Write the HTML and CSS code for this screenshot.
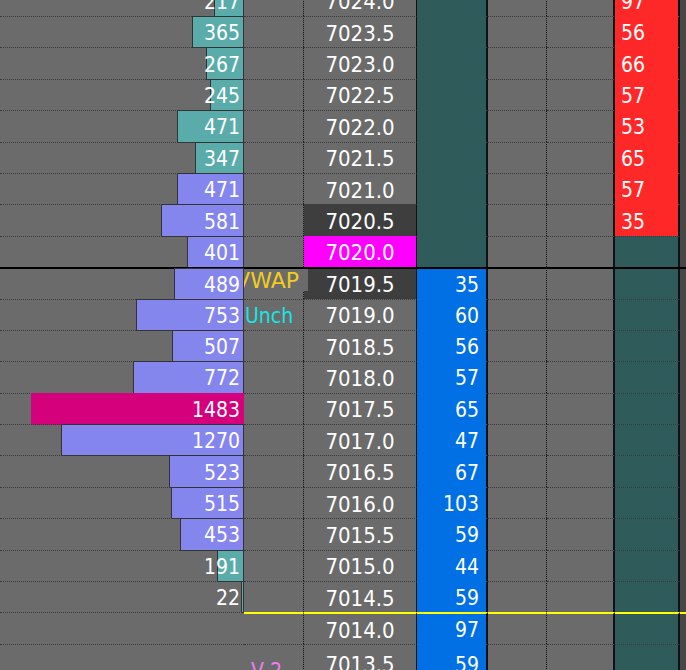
FILE: index.html
```html
<!DOCTYPE html>
<html lang="en">
<head>
    <meta charset="UTF-8">
    <title>Price Ladder</title>
    <link rel="stylesheet" href="styles.css">
</head>
<body>
    <div class="ladder">
        <div class="rows" id="rows">
            <!-- rows built below -->
        </div>
    </div>

    <script>
        // one entry per price level, top of the ladder first
        const levels = [
            { price: '7024.0', vol: 217,  tone: 'out', ask: 97 },
            { price: '7023.5', vol: 365,  tone: 'out', ask: 56 },
            { price: '7023.0', vol: 267,  tone: 'out', ask: 66 },
            { price: '7022.5', vol: 245,  tone: 'out', ask: 57 },
            { price: '7022.0', vol: 471,  tone: 'out', ask: 53 },
            { price: '7021.5', vol: 347,  tone: 'out', ask: 65 },
            { price: '7021.0', vol: 471,  tone: 'va',  ask: 57 },
            { price: '7020.5', vol: 581,  tone: 'va',  ask: 35, cell: 'inside' },
            { price: '7020.0', vol: 401,  tone: 'va',  cell: 'last' },
            { price: '7019.5', vol: 489,  tone: 'va',  bid: 35, cell: 'inside', line: 'open', tag: 'VWAP' },
            { price: '7019.0', vol: 753,  tone: 'va',  bid: 60, note: 'Unch', noteClass: 'unch' },
            { price: '7018.5', vol: 507,  tone: 'va',  bid: 56 },
            { price: '7018.0', vol: 772,  tone: 'va',  bid: 57 },
            { price: '7017.5', vol: 1483, tone: 'poc', bid: 65 },
            { price: '7017.0', vol: 1270, tone: 'va',  bid: 47 },
            { price: '7016.5', vol: 523,  tone: 'va',  bid: 67 },
            { price: '7016.0', vol: 515,  tone: 'va',  bid: 103 },
            { price: '7015.5', vol: 453,  tone: 'va',  bid: 59 },
            { price: '7015.0', vol: 191,  tone: 'out', bid: 44 },
            { price: '7014.5', vol: 22,   tone: 'out', bid: 59 },
            { price: '7014.0', bid: 97, line: 'low' },
            { price: '7013.5', bid: 59, note: 'V 2', noteClass: 'vtwo' }
        ];

        // bar length in px per contract traded
        const scale = 0.1445;

        const rowsEl = document.getElementById('rows');

        levels.forEach(level => {
            const row = document.createElement('div');
            row.className = 'row' + (level.line ? ' ' + level.line : '');

            let volHtml = '';
            if (level.vol) {
                const w = Math.max(3, Math.round(level.vol * scale - 1));
                volHtml = `
                    <div class="bar ${level.tone}" style="width:${w}px"></div>
                    <span class="num">${level.vol}</span>`;
            }

            let labelHtml = '';
            if (level.tag) {
                labelHtml = `<span class="tag"><span>${level.tag}</span></span>`;
            } else if (level.note) {
                labelHtml = `<span class="note ${level.noteClass}">${level.note}</span>`;
            }

            row.innerHTML = `
                <div class="cell vol">${volHtml}</div>
                <div class="cell label">${labelHtml}</div>
                <div class="cell price ${level.cell || ''}">${level.price}</div>
                <div class="cell bid ${level.bid ? 'on' : ''}">${level.bid || ''}</div>
                <div class="cell side"></div>
                <div class="cell side solid"></div>
                <div class="cell ask ${level.ask ? 'on' : ''}">${level.ask || ''}</div>
                <div class="cell tail"></div>
            `;
            rowsEl.appendChild(row);
        });
    </script>
</body>
</html>
```

FILE: styles.css
```css
* {
    box-sizing: border-box;
    margin: 0;
    padding: 0;
}

body {
    background: #6b6b6b;
    color: #fff;
    font-family: "DejaVu Sans Condensed", "DejaVu Sans", sans-serif;
    font-stretch: condensed;
    font-size: 21px;
}

.ladder {
    width: 686px;
    height: 670px;
    overflow: hidden;
}

.rows {
    margin-top: -15.4px;
}

.row {
    display: grid;
    grid-template-columns: 244px 60px 113px 71px 59px 68px 65px 6px;
    height: 31.4px;
}

.cell {
    border-top: 1px dotted #3a3a3a;
    display: flex;
    align-items: center;
    padding-top: 2px;
    white-space: nowrap;
}

/* volume profile */
.vol {
    display: grid;
    padding-top: 0;
}

.bar {
    grid-area: 1 / 1;
    justify-self: end;
    align-self: start;
    height: calc(100% + 2px);
    margin-top: -1px;
    margin-bottom: -1px;
    border: 1px solid #333;
}

.bar.out { background: #5aacaa; }
.bar.va  { background: #8585ee; }
.bar.poc { background: #d5007b; border-color: #d5007b; }

.num {
    grid-area: 1 / 1;
    justify-self: end;
    align-self: center;
    padding: 2px 4px 0 0;
}

/* study labels */
.label {
    position: relative;
    border-right: 1px dotted #111;
}

.tag {
    position: absolute;
    left: 0;
    right: -5px;
    top: 0;
    height: 22px;
    display: flex;
    justify-content: flex-end;
    overflow: hidden;
    background: #6b6b6b;
    color: #f2cc1e;
    font-family: "DejaVu Sans", sans-serif;
    font-stretch: normal;
    font-size: 22px;
    padding-right: 9px;
    line-height: 24px;
}

.note {
    padding-left: 1px;
}

.unch { color: #16e6e6; }

.vtwo {
    align-self: flex-start;
    color: #f07ef0;
    padding: 12px 0 0 7px;
}

/* prices */
.price {
    justify-content: center;
    border-right: 1px solid #111;
    font-size: 22px;
}

.price.inside {
    background: #3e3e3e;
    border-top-color: transparent;
}

.price.last {
    background: #ff00ff;
    border-top-color: transparent;
}

/* bids and offers */
.bid {
    background: #2f5b5b;
    border-top-color: transparent;
    border-right: 2px solid #111;
    justify-content: flex-end;
    padding-right: 7px;
}

.bid.on { background: #0070e4; }

.side {
    border-right: 1px dotted #111;
}

.side.solid {
    border-right: 2px solid #111;
}

.ask {
    background: #2f5b5b;
    border-right: 2px solid #111;
    padding-left: 6px;
}

.ask.on {
    background: #ff2828;
    border-top-color: transparent;
}

.tail {
    background: #474747;
    border-top-color: transparent;
}

/* session lines */
.row.open .cell {
    border-top: 2px solid #000;
}

.row.low .cell {
    border-top: 2px solid #ffff00;
}

.row.low .vol {
    border-top: 1px dotted #3a3a3a;
}
```
